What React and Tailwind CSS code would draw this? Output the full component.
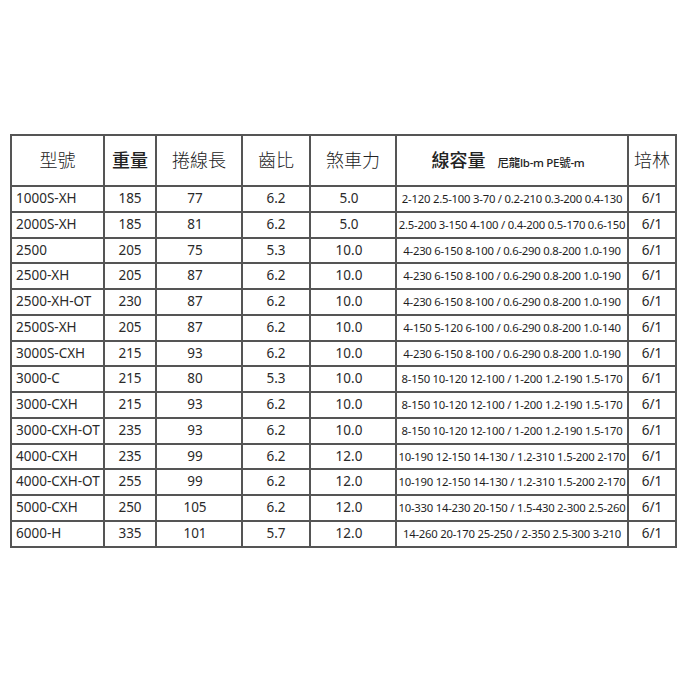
const rows = [
  ["1000S-XH", "185", "77", "6.2", "5.0", "2-120 2.5-100 3-70 / 0.2-210 0.3-200 0.4-130"],
  ["2000S-XH", "185", "81", "6.2", "5.0", "2.5-200 3-150 4-100 / 0.4-200 0.5-170 0.6-150"],
  ["2500", "205", "75", "5.3", "10.0", "4-230 6-150 8-100 / 0.6-290 0.8-200 1.0-190"],
  ["2500-XH", "205", "87", "6.2", "10.0", "4-230 6-150 8-100 / 0.6-290 0.8-200 1.0-190"],
  ["2500-XH-OT", "230", "87", "6.2", "10.0", "4-230 6-150 8-100 / 0.6-290 0.8-200 1.0-190"],
  ["2500S-XH", "205", "87", "6.2", "10.0", "4-150 5-120 6-100 / 0.6-290 0.8-200 1.0-140"],
  ["3000S-CXH", "215", "93", "6.2", "10.0", "4-230 6-150 8-100 / 0.6-290 0.8-200 1.0-190"],
  ["3000-C", "215", "80", "5.3", "10.0", "8-150 10-120 12-100 / 1-200 1.2-190 1.5-170"],
  ["3000-CXH", "215", "93", "6.2", "10.0", "8-150 10-120 12-100 / 1-200 1.2-190 1.5-170"],
  ["3000-CXH-OT", "235", "93", "6.2", "10.0", "8-150 10-120 12-100 / 1-200 1.2-190 1.5-170"],
  ["4000-CXH", "235", "99", "6.2", "12.0", "10-190 12-150 14-130 / 1.2-310 1.5-200 2-170"],
  ["4000-CXH-OT", "255", "99", "6.2", "12.0", "10-190 12-150 14-130 / 1.2-310 1.5-200 2-170"],
  ["5000-CXH", "250", "105", "6.2", "12.0", "10-330 14-230 20-150 / 1.5-430 2-300 2.5-260"],
  ["6000-H", "335", "101", "5.7", "12.0", "14-260 20-170 25-250 / 2-350 2.5-300 3-210"],
];

const cell = "border-2 border-[#555]";

export default function App() {
  return (
    <div className="w-[683px] h-[683px] bg-white pt-[134px] pl-[10px] font-['Noto_Sans','Noto_Sans_CJK_TC',sans-serif] text-[#2a2a2a]">
      <table className="table-fixed border-collapse w-[665px]">
        <colgroup>
          <col className="w-[93px]" />
          <col className="w-[52px]" />
          <col className="w-[86px]" />
          <col className="w-[68px]" />
          <col className="w-[86px]" />
          <col className="w-[232px]" />
          <col className="w-[48px]" />
        </colgroup>
        <thead>
          <tr className="h-[51px] text-[18px] text-[#222]">
            <th className={cell + " font-light"}>型號</th>
            <th className={cell + " font-medium"}>重量</th>
            <th className={cell + " font-light"}>捲線長</th>
            <th className={cell + " font-light"}>齒比</th>
            <th className={cell + " font-light"}>煞車力</th>
            <th className={cell + " font-medium pr-2"}>
              <span>線容量</span>
              <span className="ml-3 text-[11.5px] font-medium tracking-tight">尼龍lb-m PE號-m</span>
            </th>
            <th className={cell + " font-light"}>培林</th>
          </tr>
        </thead>
        <tbody className="text-[13.5px]">
          {rows.map((r) => (
            <tr key={r[0]} className="h-[25.75px]">
              <td className={cell + " pl-[4px] leading-none whitespace-nowrap"}>{r[0]}</td>
              <td className={cell + " text-center leading-none"}>{r[1]}</td>
              <td className={cell + " text-center leading-none pr-2"}>{r[2]}</td>
              <td className={cell + " text-center leading-none"}>{r[3]}</td>
              <td className={cell + " text-center leading-none pr-2"}>{r[4]}</td>
              <td className={cell + " text-center leading-none text-[11.3px] text-[#1e1e1e] tracking-[-0.02em] whitespace-nowrap"}>{r[5]}</td>
              <td className={cell + " text-center leading-none"}>6/1</td>
            </tr>
          ))}
        </tbody>
      </table>
    </div>
  );
}
